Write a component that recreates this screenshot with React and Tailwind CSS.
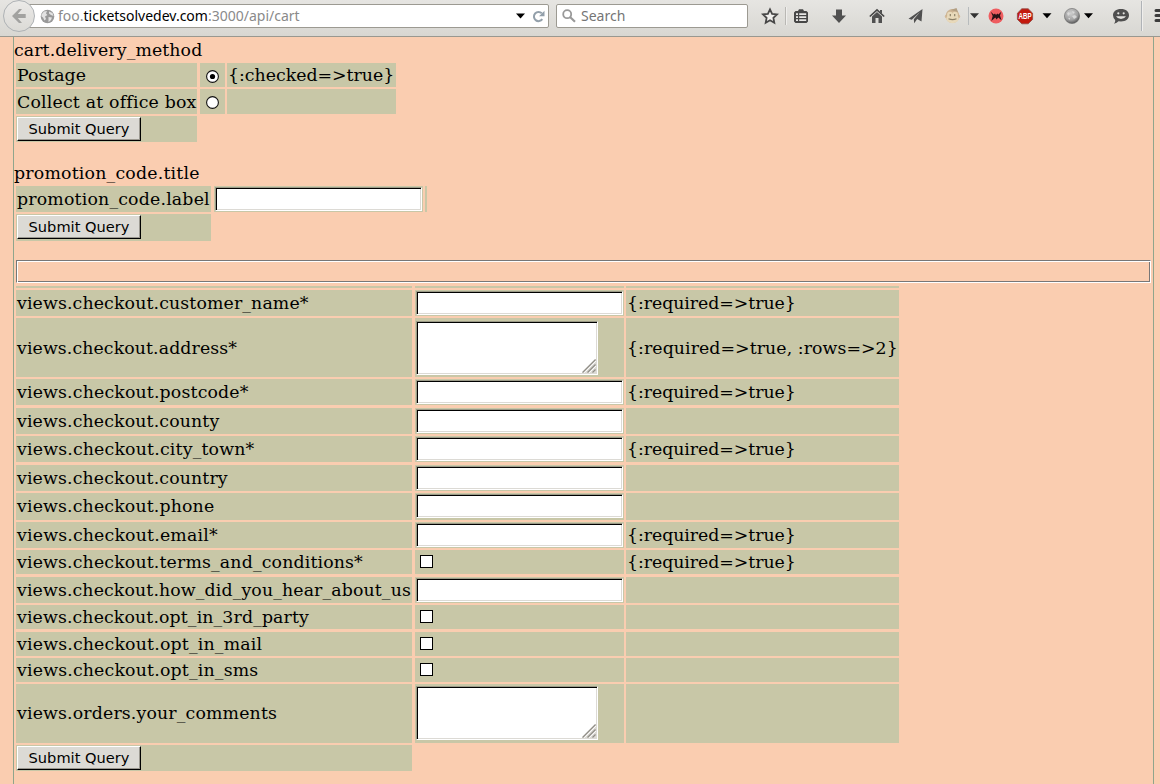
import React from 'react';

const CELL = 'bg-[#c8c7a7] shrink-0 flex items-center';

function Label({ children, spacing = '' }) {
  return <span className={`block whitespace-pre leading-5 pl-px ${spacing}`}>{children}</span>;
}

function TextInput() {
  return (
    <input
      type="text"
      className="block w-[207px] h-6 bg-white border border-t-[#9b9a88] border-l-[#9b9a88] border-r-white border-b-white shadow-[inset_1px_1px_0_#000,inset_-1px_-1px_0_#dcdad5] rounded-none outline-none px-1 text-sm"
    />
  );
}

function TextArea() {
  return (
    <div className="relative w-[182px] h-[54px]">
      <textarea className="block w-full h-full resize-none bg-white border border-t-[#9b9a88] border-l-[#9b9a88] border-r-white border-b-white shadow-[inset_1px_1px_0_#000,inset_-1px_-1px_0_#dcdad5] rounded-none outline-none px-1 text-sm" />
      <svg className="absolute right-[2px] bottom-[2px]" width="14" height="14" viewBox="0 0 14 14">
        <path d="M14 0V14H0Z" fill="#dcdad5" />
        <path d="M0.5 13.5L13.5 0.5M5.5 13.5L13.5 5.5M10.5 13.5L13.5 10.5" stroke="#908e87" strokeWidth="1.2" />
        <path d="M2.2 13.8L14 2M7.2 13.8L14 7" stroke="#fff" strokeWidth="0.9" />
      </svg>
    </div>
  );
}

function Check() {
  return <span className="block ml-1 size-[13px] bg-white border border-black" />;
}

function Radio({ on }) {
  return (
    <svg width="13" height="13" viewBox="0 0 13 13" className="block">
      <circle cx="6.5" cy="6.5" r="5.9" fill="#fff" stroke="#111" strokeWidth="1.1" />
      {on && <circle cx="6.5" cy="6.5" r="2.6" fill="#000" />}
    </svg>
  );
}

function Submit() {
  return (
    <button className="block w-[124px] h-6 bg-[#dcdad5] border border-t-white border-l-white border-r-black border-b-black shadow-[inset_-1px_-1px_0_#9b9890] font-['DejaVu_Sans',sans-serif] text-[14.6px] leading-[22px] text-center whitespace-nowrap">
      Submit Query
    </button>
  );
}

const REQUIRED = '{:required=>true}';

const rows = [
  { label: 'views.checkout.customer_name*', kind: 'text', hint: REQUIRED, size: 'mt-[2px] h-[26px]', spacing: 'tracking-[0.13px]' },
  { label: 'views.checkout.address*', kind: 'area', hint: '{:required=>true, :rows=>2}', size: 'mt-[2px] h-[59px]', spacing: 'tracking-[0.1px]', hintSpacing: 'tracking-[0.07px]' },
  { label: 'views.checkout.postcode*', kind: 'text', hint: REQUIRED, size: 'mt-[2px] h-[26px]', spacing: 'tracking-[0.16px]' },
  { label: 'views.checkout.county', kind: 'text', hint: '', size: 'mt-[3px] h-[26px]', spacing: 'tracking-[0.14px]' },
  { label: 'views.checkout.city_town*', kind: 'text', hint: REQUIRED, size: 'mt-[2px] h-[26px]', spacing: 'tracking-[0.18px]' },
  { label: 'views.checkout.country', kind: 'text', hint: '', size: 'mt-[3px] h-[26px]', spacing: 'tracking-[0.14px]' },
  { label: 'views.checkout.phone', kind: 'text', hint: '', size: 'mt-[2px] h-[27px]', spacing: 'tracking-[0.15px] -mt-0.5' },
  { label: 'views.checkout.email*', kind: 'text', hint: REQUIRED, size: 'mt-[2px] h-[26px]', spacing: 'tracking-[0.18px]' },
  { label: 'views.checkout.terms_and_conditions*', kind: 'check', hint: REQUIRED, size: 'mt-[2px] h-6', spacing: 'tracking-[0.15px]' },
  { label: 'views.checkout.how_did_you_hear_about_us', kind: 'text', hint: '', size: 'mt-[3px] h-[26px]', spacing: 'tracking-[0.12px]' },
  { label: 'views.checkout.opt_in_3rd_party', kind: 'check', hint: '', size: 'mt-[2px] h-6', spacing: 'tracking-[0.12px]' },
  { label: 'views.checkout.opt_in_mail', kind: 'check', hint: '', size: 'mt-[3px] h-6', spacing: 'tracking-[0.18px]' },
  { label: 'views.checkout.opt_in_sms', kind: 'check', hint: '', size: 'mt-[2px] h-6', spacing: 'tracking-[0.18px]' },
  { label: 'views.orders.your_comments', kind: 'lastArea', hint: '', size: 'mt-[2px] h-[59px]', spacing: 'tracking-[0.15px] -mt-0.5' },
];

function Field({ kind }) {
  if (kind === 'text') return <div className="pl-px pt-px"><TextInput /></div>;
  if (kind === 'area') return <div className="pl-px pt-[3px]"><TextArea /></div>;
  if (kind === 'lastArea') return <div className="pl-px pt-[2px]"><TextArea /></div>;
  return <div className="pl-px pt-[5px]"><Check /></div>;
}

function Caret({ className }) {
  return (
    <svg className={className} width="9" height="6" viewBox="0 0 9 6">
      <path d="M0 0.5H9L4.5 5.5Z" fill="#000" />
    </svg>
  );
}

function Toolbar() {
  return (
    <div className="h-[37px] shrink-0 flex items-start bg-linear-to-b from-[#e6e5e2] to-[#d8d7d2] border-b border-[#999890] font-['Noto_Sans',sans-serif] text-sm">
      <div className="relative w-[549px] h-7 mt-1 shrink-0">
        <div className="ml-[18px] w-[531px] h-6 bg-white border border-[#9c9a92] rounded-[2px] flex items-center">
          <svg className="ml-[20.5px] shrink-0" width="15" height="15" viewBox="0 0 15 15">
            <circle cx="7.5" cy="7.5" r="6.8" fill="#999" />
            <path d="M1.5 5.5L4 2.5L7 2L6 4.5L7.5 6L5 7.5L6 10L4.5 11.5L3 8.5L1.5 7.5ZM9 2.5L12.5 4L13.5 7L11 6L9 4.5ZM8.5 8L12 8.5L11 11L8.5 13.3Z" fill="#e2e2e2" />
          </svg>
          <span className="ml-[3.5px] whitespace-nowrap text-[#8a8a8a] w-[242px]">
            foo.<span className="text-black">ticketsolvedev.com</span>:3000/api/cart
          </span>
          <Caret className="ml-auto" />
          <svg className="ml-[6.5px] mr-[3.5px] shrink-0" width="13" height="13" viewBox="0 0 13 13" fill="none">
            <path d="M9.8 3.3A4.6 4.6 0 1 0 10.3 9.2" stroke="#93a0ab" strokeWidth="2" />
            <path d="M12.5 0.8V6.2H7Z" fill="#93a0ab" />
          </svg>
        </div>
        <div className="absolute left-[3px] -top-[4px] size-8 rounded-full border border-[#aeb2b5] bg-linear-to-b from-[#ebeae8] to-[#dbdad6] flex items-center justify-center">
          <svg width="16" height="16" viewBox="0 0 16 16">
            <path d="M1 8L8 1H11L6.8 5.9H14.7V10.1H6.8L11 15H8Z" fill="#a2a2a0" />
          </svg>
        </div>
      </div>
      <div className="ml-[7px] mt-1 w-48 h-6 shrink-0 bg-white border border-[#9c9a92] rounded-[2px] flex items-center text-[#757575]">
        <svg className="ml-[5px]" width="14" height="14" viewBox="0 0 14 14" fill="none" stroke="#999">
          <circle cx="5.2" cy="5.2" r="4" strokeWidth="1.8" />
          <path d="M8 8L13 12.8" strokeWidth="2.2" />
        </svg>
        <span className="ml-[5px]">Search</span>
      </div>
      <svg className="shrink-0" width="412" height="36" viewBox="748 0 412 36">
        <path d="M770 9.3L772.1 13.8L777 14.4L773.4 17.8L774.3 22.7L770 20.3L765.7 22.7L766.6 17.8L763 14.4L767.9 13.8Z" fill="#f0efed" stroke="#474747" strokeWidth="1.8" />
        <path d="M785.5 7V25" stroke="#b9b8b4" />
        <path d="M786.5 7V25" stroke="#efeeec" />
        <path d="M795.5 11H798L799 9.3H803L804 11H806.5L808 12.5V21.5L806.5 23H795.5L794 21.5V12.5Z" fill="#474747" />
        <path d="M796 13.2H798V15H796ZM799.2 13.2H806.2V15H799.2ZM796 16.3H798V18H796ZM799.2 16.3H806.2V18H799.2ZM796 19.3H798V21H796ZM799.2 19.3H806.2V21H799.2Z" fill="#e8e7e5" />
        <path d="M836 9.5H842V15.5H846L839 23L832 15.5H836Z" fill="#505050" />
        <path d="M869.8 16.5L877 9.8L884.2 16.5" fill="none" stroke="#484848" strokeWidth="1.7" />
        <path d="M872 16.5L877 12L882 16.5V23H878.5V18H875.5V23H872ZM880 10H882V14L880 12Z" fill="#505050" />
        <path d="M908.5 18.8L922.5 9L921.5 21.5L917.2 19L914.2 23.3L913.8 19.2L920 12L911.8 19.7Z" fill="#505050" />
        <g>
          <circle cx="946.8" cy="16.5" r="2" fill="#d6bd9b" />
          <circle cx="958.2" cy="16.5" r="2" fill="#d6bd9b" />
          <circle cx="952.5" cy="16" r="6.9" fill="#cdb494" />
          <path d="M950.5 10L956.5 8L958 12Z" fill="#b39f83" />
          <ellipse cx="952.5" cy="18.6" rx="6.2" ry="4.6" fill="#e8d9ba" />
          <ellipse cx="950" cy="14.8" rx="2.9" ry="3" fill="#e8d9ba" />
          <ellipse cx="955" cy="14.8" rx="2.9" ry="3" fill="#e8d9ba" />
          <path d="M950.3 14V16.3M954.7 14V16.3M948.5 18.8Q952.5 20.4 956.5 18.8" stroke="#8c8068" strokeWidth="1.2" fill="none" />
        </g>
        <path d="M968.5 7V25" stroke="#b7bbbd" />
        <path d="M970 13.2H979L974.5 18.3Z" fill="#333" />
        <circle cx="996" cy="16" r="7.5" fill="#ef5d60" />
        <path d="M990.8 11.8L993.7 14.6L995 13.4L996 14.9L997.3 13.4L998.3 14.6L1001.3 11.8L1000 15.5L1001.5 20.3L998.3 17.4L996.5 19.4L995.3 17.4L991.3 21L992.7 16Z" fill="#281316" />
        <path d="M1021.8 8.8H1028.2L1032.6 13.2V19.4L1028.2 23.8H1021.8L1017.4 19.4V13.2Z" fill="#c31a0e" stroke="#8f4a44" strokeWidth=".8" />
        <text x="1025" y="19.3" textAnchor="middle" fill="#fff" fontFamily="Liberation Sans, sans-serif" fontWeight="700" fontSize="8.6" textLength="13" lengthAdjust="spacingAndGlyphs">ABP</text>
        <path d="M1042.5 13.2H1051.5L1047 18.3Z" fill="#000" />
        <defs>
          <radialGradient id="ball" cx=".42" cy=".32" r=".75">
            <stop offset="0" stopColor="#cfcfcf" />
            <stop offset=".6" stopColor="#a0a0a0" />
            <stop offset="1" stopColor="#444" />
          </radialGradient>
        </defs>
        <circle cx="1072" cy="16" r="7.6" fill="url(#ball)" stroke="#6a6a6a" strokeWidth=".6" />
        <path d="M1067 13L1069 12L1070 14L1068 16ZM1072 11L1075 12L1073 14ZM1072 16L1075 15L1077 17L1074 19ZM1068 18L1070 18L1070 20Z" fill="#dedede" opacity=".85" />
        <path d="M1084 13.2H1093L1088.5 18.3Z" fill="#000" />
        <path d="M1121 9C1126 9 1129 11.7 1129 15.3C1129 19 1126 21.5 1121 21.5L1118.5 21.3Q1117 23.3 1114 23.7Q1115.5 22.3 1115.2 20Q1113 18 1113 15.3C1113 11.7 1116 9 1121 9Z" fill="#4f4f4f" />
        <circle cx="1118.3" cy="13.3" r="1.1" fill="#e4e3e0" />
        <circle cx="1123.7" cy="13.3" r="1.1" fill="#e4e3e0" />
        <path d="M1116 16.2H1126Q1124.5 18.9 1121 18.9Q1117.5 18.9 1116 16.2Z" fill="#e4e3e0" />
        <path d="M1141.5 1V31" stroke="#afb3b7" />
        <path d="M1142.5 1V31" stroke="#efeeec" />
        <path d="M1156 10.5H1160M1156 15.5H1160M1156 20.5H1160" stroke="#3c3c3c" strokeWidth="3" strokeLinecap="round" />
      </svg>
    </div>
  );
}

export default function App() {
  return (
    <div className="w-[1160px] h-[784px] overflow-hidden flex flex-col bg-[#facdb0] text-black">
      <Toolbar />
      <main className="flex-1 ml-[13px] w-[1141px] border-x border-[#8fa58c] font-['DejaVu_Serif',serif] text-[17.33px] leading-5">
        <div className="h-[26px] pt-[3px] whitespace-nowrap tracking-[0.1px]">cart.delivery_method</div>
        <section className="ml-[2px] flex flex-col gap-[2px]">
          <div className="flex h-6">
            <div className={`${CELL} w-[181px]`}><Label>Postage</Label></div>
            <div className={`${CELL} ml-[3px] w-[25px] pl-1.5 pt-[3px]`}><Radio on /></div>
            <div className={`${CELL} ml-[2px] w-[169px]`}><Label>{'{:checked=>true}'}</Label></div>
          </div>
          <div className="flex h-[25px]">
            <div className={`${CELL} w-[181px]`}><Label spacing="tracking-[0.19px] [font-variant-ligatures:common-ligatures]">Collect at office box</Label></div>
            <div className={`${CELL} ml-[3px] w-[25px] pl-1.5 pt-[2px]`}><Radio /></div>
            <div className={`${CELL} ml-[2px] w-[169px]`} />
          </div>
          <div className="h-[26px] w-[181px] bg-[#c8c7a7] pl-px pt-px"><Submit /></div>
        </section>

        <div className="mt-[18px] h-[26px] pt-[3px] whitespace-nowrap tracking-[0.2px]">promotion_code.title</div>
        <section className="ml-[2px] flex flex-col gap-[2px]">
          <div className="flex h-[26px]">
            <div className={`${CELL} w-[195px]`}><Label spacing="tracking-[0.18px]">promotion_code.label</Label></div>
            <div className="ml-[3px] w-[209px] bg-[#c8c7a7] pl-px pt-px"><TextInput /></div>
            <div className="ml-[2px] w-[2px] bg-[#c8c7a7]" />
          </div>
          <div className="h-[27px] w-[195px] bg-[#c8c7a7] pl-px pt-px"><Submit /></div>
        </section>

        <div className="mt-[19px] ml-[2px] w-[1135px] h-[23px] border border-t-[#777] border-l-[#777] border-r-white border-b-white shadow-[inset_1px_1px_0_#fff,inset_-1px_-1px_0_#777]" />

        <section className="mt-[3px] ml-[2px]">
          <div className="flex h-[2px]">
            <div className="w-[396px] bg-[#c8c7a7]" />
            <div className="ml-[3px] w-[209px] bg-[#c8c7a7]" />
            <div className="ml-[2px] w-[273px] bg-[#c8c7a7]" />
          </div>
          {rows.map(({ label, kind, hint, size, spacing, hintSpacing = 'tracking-[-0.05px]' }) => (
            <div key={label} className={`flex ${size}`}>
              <div className={`${CELL} w-[396px]`}><Label spacing={spacing}>{label}</Label></div>
              <div className="ml-[3px] w-[209px] bg-[#c8c7a7]"><Field kind={kind} /></div>
              <div className={`${CELL} ml-[2px] w-[273px]`}><Label spacing={hintSpacing}>{hint}</Label></div>
            </div>
          ))}
          <div className="mt-[2px] h-[26px] w-[396px] bg-[#c8c7a7] pl-px pt-px"><Submit /></div>
        </section>
      </main>
    </div>
  );
}
